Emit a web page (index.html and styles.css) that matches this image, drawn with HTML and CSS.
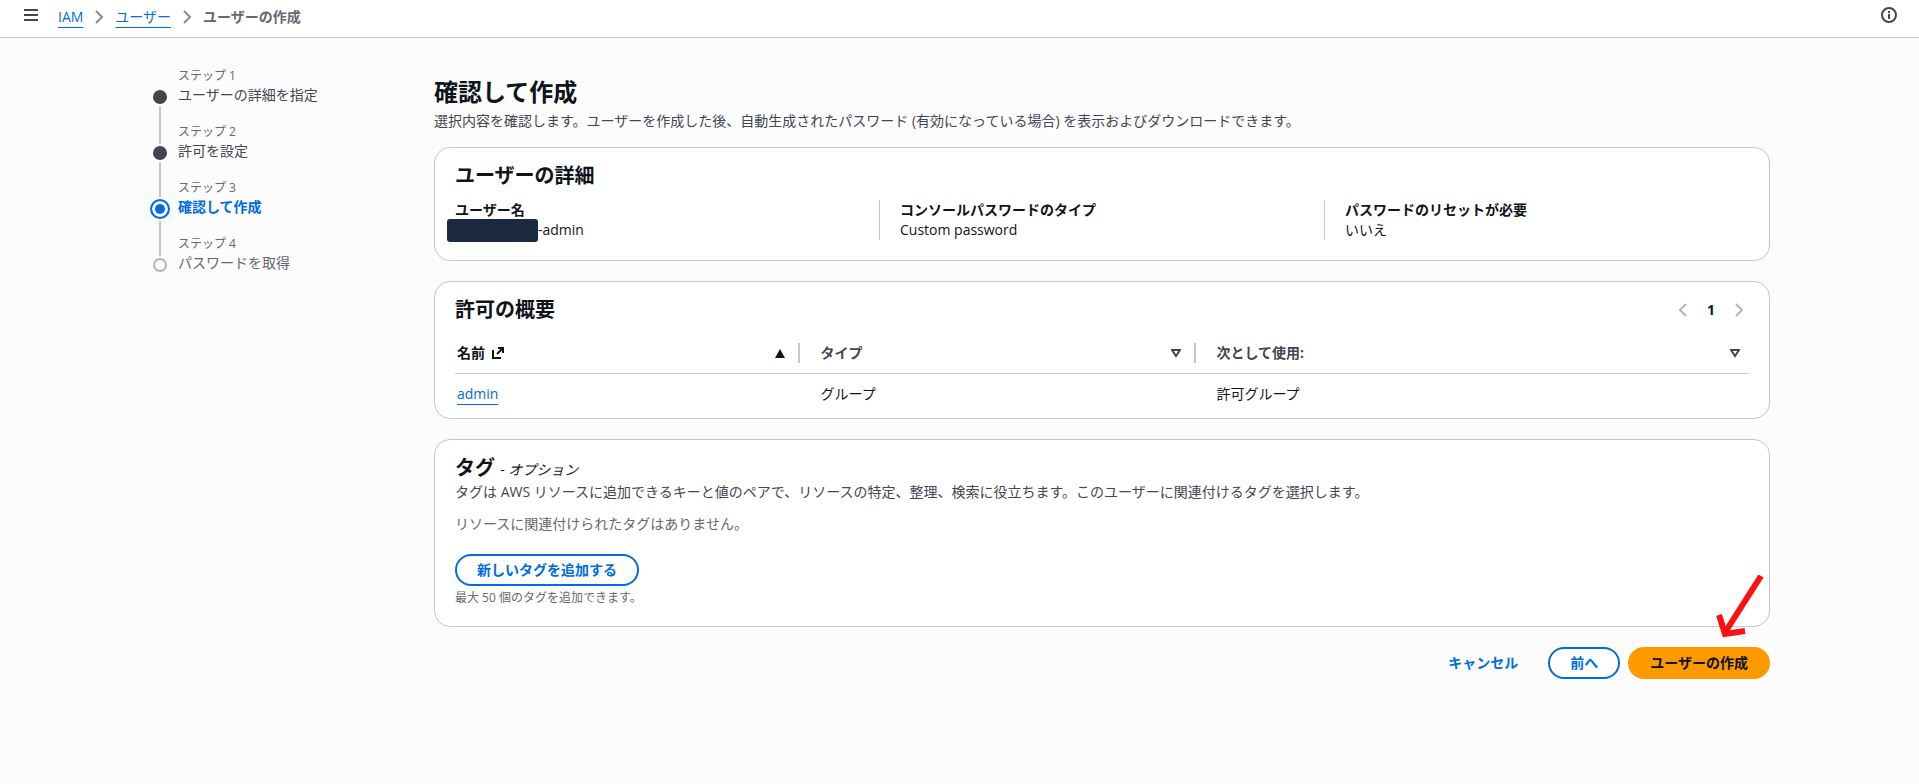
FILE: index.html
```html
<!DOCTYPE html>
<html lang="ja">
<head>
<meta charset="utf-8">
<meta name="viewport" content="width=device-width, initial-scale=1">
<title>ユーザーの作成</title>
<link rel="stylesheet" href="styles.css">
</head>
<body>
<header class="topbar">
  <button class="icon-button" type="button" aria-label="メニュー">
    <svg width="14" height="14" viewBox="0 0 14 14"><path d="M0 2h14M0 7h14M0 12h14"/></svg>
  </button>
  <nav class="breadcrumbs" aria-label="パンくず">
    <a class="link" href="#">IAM</a>
    <svg class="chevron" width="8" height="14" viewBox="0 0 8 14"><path d="M1 1l6 6-6 6"/></svg>
    <a class="link" href="#">ユーザー</a>
    <svg class="chevron" width="8" height="14" viewBox="0 0 8 14"><path d="M1 1l6 6-6 6"/></svg>
    <span class="current">ユーザーの作成</span>
  </nav>
  <button class="icon-button info" type="button" aria-label="情報">
    <svg width="16" height="16" viewBox="0 0 16 16"><circle cx="8" cy="8" r="7"/><path d="M8 4v2M8 7v5"/></svg>
  </button>
</header>

<div class="layout">
  <ol class="steps">
    <li class="step done"><span class="marker"></span><div><p class="step-label">ステップ 1</p><p class="step-title">ユーザーの詳細を指定</p></div></li>
    <li class="step done"><span class="marker"></span><div><p class="step-label">ステップ 2</p><p class="step-title">許可を設定</p></div></li>
    <li class="step active" aria-current="step"><span class="marker"></span><div><p class="step-label">ステップ 3</p><p class="step-title">確認して作成</p></div></li>
    <li class="step"><span class="marker"></span><div><p class="step-label">ステップ 4</p><p class="step-title">パスワードを取得</p></div></li>
  </ol>

  <main class="content">
    <div class="page-head">
      <h1>確認して作成</h1>
      <p class="description">選択内容を確認します。ユーザーを作成した後、自動生成されたパスワード (有効になっている場合) を表示およびダウンロードできます。</p>
    </div>

    <section class="card">
      <h2>ユーザーの詳細</h2>
      <dl class="details">
        <div class="detail"><dt>ユーザー名</dt><dd class="user-name"><span class="redacted"></span>-admin</dd></div>
        <div class="detail"><dt>コンソールパスワードのタイプ</dt><dd>Custom password</dd></div>
        <div class="detail"><dt>パスワードのリセットが必要</dt><dd>いいえ</dd></div>
      </dl>
    </section>

    <section class="card permissions">
      <div class="card-head">
        <h2>許可の概要</h2>
        <div class="pagination">
          <button type="button" aria-label="前のページ" disabled><svg class="chevron" width="8" height="14" viewBox="0 0 8 14"><path d="M7 1L1 7l6 6"/></svg></button>
          <button class="page" type="button">1</button>
          <button type="button" aria-label="次のページ" disabled><svg class="chevron" width="8" height="14" viewBox="0 0 8 14"><path d="M1 1l6 6-6 6"/></svg></button>
        </div>
      </div>
      <table class="table">
        <thead>
          <tr>
            <th class="col-name sorted" scope="col"><div class="th"><span class="th-text">名前
              <svg class="external" width="12" height="12" viewBox="0 0 12 12"><path d="M1 3v8h8M6 1h5v5M11 1L5 7"/></svg></span>
              <svg class="sort" width="10" height="9" viewBox="0 0 10 9"><path class="filled" d="M5 0l5 9H0z"/></svg></div></th>
            <th class="col-type" scope="col"><div class="th"><span class="th-text">タイプ</span>
              <svg class="sort" width="10" height="9" viewBox="0 0 10 9"><path d="M1 1h8L5 7z"/></svg></div></th>
            <th class="col-use" scope="col"><div class="th"><span class="th-text">次として使用:</span>
              <svg class="sort" width="10" height="9" viewBox="0 0 10 9"><path d="M1 1h8L5 7z"/></svg></div></th>
          </tr>
        </thead>
        <tbody>
          <tr><td><a class="link" href="#">admin</a></td><td>グループ</td><td>許可グループ</td></tr>
        </tbody>
      </table>
    </section>

    <section class="card tags">
      <h2>タグ <span class="optional">- <i>オプション</i></span></h2>
      <p class="description">タグは AWS リソースに追加できるキーと値のペアで、リソースの特定、整理、検索に役立ちます。このユーザーに関連付けるタグを選択します。</p>
      <p class="empty">リソースに関連付けられたタグはありません。</p>
      <button class="button" type="button">新しいタグを追加する</button>
      <p class="hint">最大 50 個のタグを追加できます。</p>
    </section>

    <div class="actions">
      <button class="button plain" type="button">キャンセル</button>
      <button class="button" type="button">前へ</button>
      <button class="button primary" type="button">ユーザーの作成</button>
      <svg class="arrow" width="48" height="64" viewBox="0 0 48 64"><path d="M45 1L8 59M3 40l6 19 20-3"/></svg>
    </div>
  </main>
</div>
</body>
</html>
```
FILE: styles.css
```css
* { box-sizing: border-box; }

body {
  margin: 0;
  min-height: 100vh;
  background: #fcfcfd;
  color: #0f141a;
  font: 14px/20px "Open Sans", "Noto Sans CJK JP", sans-serif;
}

h1, h2, p, ol, dl, dd { margin: 0; padding: 0; }
h1 { font-size: 24px; line-height: 30px; }
h2 { font-size: 20px; line-height: 24px; }
button { font: inherit; cursor: pointer; }
svg { display: block; fill: none; stroke: currentColor; stroke-width: 2; }

.link {
  color: #006ce0;
  text-decoration: underline;
  text-decoration-thickness: 1px;
  text-underline-offset: 5px;
}

.topbar {
  display: flex;
  align-items: center;
  gap: 18px;
  height: 38px;
  padding: 0 20px 4px 22px;
  background: #fff;
  border-bottom: 1px solid #c6c6cd;
}

.icon-button {
  padding: 0 2px 4px;
  border: 0;
  background: none;
  color: #424650;
}
.info { margin-left: auto; }

.breadcrumbs {
  display: flex;
  align-items: center;
  gap: 12px;
}
.breadcrumbs .chevron { color: #8c8c94; }
.current { color: #656871; font-weight: 700; }

.layout {
  display: grid;
  grid-template-columns: 265px minmax(0, 1fr);
  gap: 20px;
  max-width: 1621px;
  margin: 0 auto;
  padding-bottom: 40px;
}

.steps {
  padding-top: 29px;
  list-style: none;
}
.step {
  position: relative;
  display: grid;
  grid-template-columns: 22px 1fr;
  gap: 7px;
  padding-bottom: 18px;
}
.step-label {
  color: #656871;
  font-size: 12px;
  line-height: 18px;
}
.step-title { color: #656871; }
.done .step-title { color: #424650; }
.active .step-title { color: #006ce0; font-weight: 700; }

.marker {
  width: 14px;
  height: 14px;
  margin: 23px auto 0;
  border: 2px solid #b4b4bb;
  border-radius: 50%;
}
.done .marker { border-color: #424650; background: #424650; }
.active .marker {
  width: 20px;
  height: 20px;
  margin-top: 20px;
  margin-bottom: -4px;
  border-color: #006ce0;
  background: #006ce0;
  box-shadow: inset 0 0 0 3px #fff;
}
.step:not(:last-child)::after {
  content: "";
  position: absolute;
  left: 10px;
  top: 39px;
  width: 2px;
  height: 38px;
  background: #c6c6cd;
}
.step.active::after { top: 42px; height: 35px; }
.step:nth-child(2)::after { height: 35px; }

.content {
  display: flex;
  flex-direction: column;
  gap: 20px;
  padding-top: 39px;
}
.page-head { margin-bottom: -4px; }
.description { color: #424650; }
.page-head .description { margin-top: 4px; }

.card {
  padding: 16px 20px 20px;
  background: #fff;
  border: 1px solid #c6c6cd;
  border-radius: 16px;
}

.details { display: flex; gap: 20px; margin-top: 12px; }
.detail { flex: 1; box-sizing: content-box; }
.detail + .detail { padding-left: 20px; border-left: 1px solid #c6c6cd; }
dt { font-weight: 700; }
.user-name { display: flex; height: 20px; }
.redacted {
  width: 91px;
  height: 23px;
  margin: -1px 0 0 -8px;
  border-radius: 3px;
  background: #1b2a41;
}

.card-head { display: flex; justify-content: space-between; align-items: center; }
.permissions { padding-bottom: 4px; }
.pagination { display: flex; margin-right: -4px; }
.pagination button {
  display: flex;
  align-items: center;
  justify-content: center;
  width: 28px;
  height: 24px;
  padding: 0;
  border: 0;
  background: none;
  color: #b4b4bb;
}
.pagination .page { color: #0f141a; font-weight: 700; }

.table {
  width: 100%;
  margin-top: 11px;
  border-collapse: collapse;
  table-layout: fixed;
}
.col-name { width: 26.7%; }
.col-type { width: 30.6%; }
.table th { padding: 10px 0; border-bottom: 1px solid #c6c6cd; color: #424650; text-align: left; }
.table th.sorted { color: #0f141a; }
.table td { padding: 10px 0 10px 20px; }
.table td:first-child { padding-left: 2px; }
.th {
  display: flex;
  justify-content: space-between;
  align-items: center;
  height: 20px;
  padding: 0 13px 0 20px;
  border-right: 2px solid #c6c6cd;
}
.col-name .th { padding-left: 2px; }
.col-use .th { padding-right: 9px; border-right: 0; }
.th-text { display: flex; align-items: center; gap: 7px; }
.filled { fill: currentColor; stroke: none; }

.optional { font-size: 14px; font-weight: 400; }
.empty { margin: 12px 0 20px; color: #656871; }
.hint { margin-top: 4px; color: #656871; font-size: 12px; line-height: 16px; }

.button {
  height: 32px;
  padding: 0 20px;
  border: 2px solid #006ce0;
  border-radius: 16px;
  background: #fff;
  color: #006ce0;
  font-weight: 700;
  line-height: 20px;
}
.plain { border-color: transparent; background: none; }
.primary { border-color: #ff9900; background: #ff9900; color: #0f141a; }

.actions {
  position: relative;
  display: flex;
  justify-content: flex-end;
  gap: 8px;
}
.arrow {
  position: absolute;
  right: 6px;
  top: -72px;
  color: #ff0f0f;
  stroke-width: 6;
  pointer-events: none;
}
```
